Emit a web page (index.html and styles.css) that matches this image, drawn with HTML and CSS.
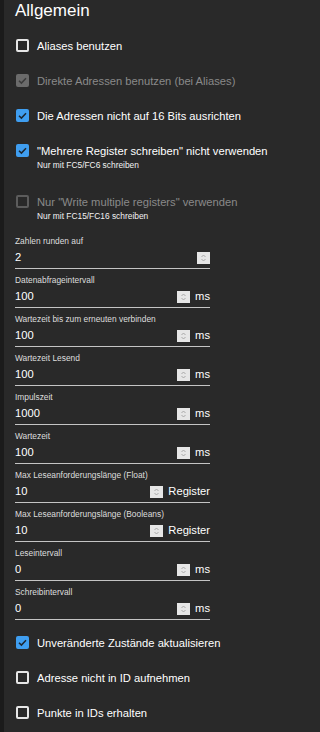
FILE: index.html
```html
<!DOCTYPE html>
<html lang="de">
<head>
<meta charset="utf-8">
<title>Allgemein</title>
<link rel="stylesheet" href="styles.css">
</head>
<body>
<div class="page">
  <h1 class="title">Allgemein</h1>

  <div class="checks">
    <div class="check">
      <span class="box"></span>
      <span class="text">Aliases benutzen</span>
    </div>
    <div class="check disabled">
      <span class="box checked"><svg viewBox="0 0 13 13"><polyline points="3,6.8 5.4,9.1 10,4.3"/></svg></span>
      <span class="text">Direkte Adressen benutzen (bei Aliases)</span>
    </div>
    <div class="check">
      <span class="box checked"><svg viewBox="0 0 13 13"><polyline points="3,6.8 5.4,9.1 10,4.3"/></svg></span>
      <span class="text">Die Adressen nicht auf 16 Bits ausrichten</span>
    </div>
    <div class="check">
      <span class="box checked"><svg viewBox="0 0 13 13"><polyline points="3,6.8 5.4,9.1 10,4.3"/></svg></span>
      <span class="text">"Mehrere Register schreiben" nicht verwenden</span>
    </div>
    <div class="help">Nur mit FC5/FC6 schreiben</div>
    <div class="check disabled spaced">
      <span class="box"></span>
      <span class="text">Nur "Write multiple registers" verwenden</span>
    </div>
    <div class="help">Nur mit FC15/FC16 schreiben</div>
  </div>

  <div class="fields">
    <div class="field">
      <div class="label">Zahlen runden auf</div>
      <div class="input">
        <span class="value">2</span>
        <span class="spin"><svg viewBox="0 0 13 12"><polyline points="4.5,5 6.5,3 8.5,5"/><polyline points="4.5,7 6.5,9 8.5,7"/></svg></span>
      </div>
    </div>
    <div class="field">
      <div class="label">Datenabfrageintervall</div>
      <div class="input">
        <span class="value">100</span>
        <span class="spin"><svg viewBox="0 0 13 12"><polyline points="4.5,5 6.5,3 8.5,5"/><polyline points="4.5,7 6.5,9 8.5,7"/></svg></span>
        <span class="unit">ms</span>
      </div>
    </div>
    <div class="field">
      <div class="label">Wartezeit bis zum erneuten verbinden</div>
      <div class="input">
        <span class="value">100</span>
        <span class="spin"><svg viewBox="0 0 13 12"><polyline points="4.5,5 6.5,3 8.5,5"/><polyline points="4.5,7 6.5,9 8.5,7"/></svg></span>
        <span class="unit">ms</span>
      </div>
    </div>
    <div class="field">
      <div class="label">Wartezeit Lesend</div>
      <div class="input">
        <span class="value">100</span>
        <span class="spin"><svg viewBox="0 0 13 12"><polyline points="4.5,5 6.5,3 8.5,5"/><polyline points="4.5,7 6.5,9 8.5,7"/></svg></span>
        <span class="unit">ms</span>
      </div>
    </div>
    <div class="field">
      <div class="label">Impulszeit</div>
      <div class="input">
        <span class="value">1000</span>
        <span class="spin"><svg viewBox="0 0 13 12"><polyline points="4.5,5 6.5,3 8.5,5"/><polyline points="4.5,7 6.5,9 8.5,7"/></svg></span>
        <span class="unit">ms</span>
      </div>
    </div>
    <div class="field">
      <div class="label">Wartezeit</div>
      <div class="input">
        <span class="value">100</span>
        <span class="spin"><svg viewBox="0 0 13 12"><polyline points="4.5,5 6.5,3 8.5,5"/><polyline points="4.5,7 6.5,9 8.5,7"/></svg></span>
        <span class="unit">ms</span>
      </div>
    </div>
    <div class="field">
      <div class="label">Max Leseanforderungslänge (Float)</div>
      <div class="input">
        <span class="value">10</span>
        <span class="spin"><svg viewBox="0 0 13 12"><polyline points="4.5,5 6.5,3 8.5,5"/><polyline points="4.5,7 6.5,9 8.5,7"/></svg></span>
        <span class="unit">Register</span>
      </div>
    </div>
    <div class="field">
      <div class="label">Max Leseanforderungslänge (Booleans)</div>
      <div class="input">
        <span class="value">10</span>
        <span class="spin"><svg viewBox="0 0 13 12"><polyline points="4.5,5 6.5,3 8.5,5"/><polyline points="4.5,7 6.5,9 8.5,7"/></svg></span>
        <span class="unit">Register</span>
      </div>
    </div>
    <div class="field">
      <div class="label">Leseintervall</div>
      <div class="input">
        <span class="value">0</span>
        <span class="spin"><svg viewBox="0 0 13 12"><polyline points="4.5,5 6.5,3 8.5,5"/><polyline points="4.5,7 6.5,9 8.5,7"/></svg></span>
        <span class="unit">ms</span>
      </div>
    </div>
    <div class="field">
      <div class="label">Schreibintervall</div>
      <div class="input">
        <span class="value">0</span>
        <span class="spin"><svg viewBox="0 0 13 12"><polyline points="4.5,5 6.5,3 8.5,5"/><polyline points="4.5,7 6.5,9 8.5,7"/></svg></span>
        <span class="unit">ms</span>
      </div>
    </div>
  </div>

  <div class="checks bottom">
    <div class="check">
      <span class="box checked"><svg viewBox="0 0 13 13"><polyline points="3,6.8 5.4,9.1 10,4.3"/></svg></span>
      <span class="text">Unveränderte Zustände aktualisieren</span>
    </div>
    <div class="check">
      <span class="box"></span>
      <span class="text">Adresse nicht in ID aufnehmen</span>
    </div>
    <div class="check">
      <span class="box"></span>
      <span class="text">Punkte in IDs erhalten</span>
    </div>
  </div>
</div>
</body>
</html>
```

FILE: styles.css
```css
html, body {
  margin: 0;
  padding: 0;
  background: #292929;
}

body {
  font-family: "Liberation Sans", Arial, sans-serif;
  color: #ffffff;
}

.page {
  box-sizing: border-box;
  min-height: 732px;
  border-left: 4px solid #1b1b1b;
  padding-left: 11px;
  padding-top: 1px;
}

.title {
  margin: 0;
  font-size: 17px;
  font-weight: normal;
  line-height: 20px;
  color: #ffffff;
}

.checks {
  margin-top: 7px;
}

.check {
  display: flex;
  align-items: center;
  height: 35px;
  padding-left: 1px;
}

.check.spaced {
  margin-top: 14px;
}

.box {
  box-sizing: border-box;
  width: 13px;
  height: 13px;
  border: 2px solid #e6e6e6;
  border-radius: 2px;
  flex: none;
  display: flex;
  align-items: center;
  justify-content: center;
}

.box svg {
  width: 13px;
  height: 13px;
  flex: none;
}

.box svg polyline {
  fill: none;
  stroke: #1d2630;
  stroke-width: 1.5;
}

.box.checked {
  border: none;
  background: #3f9ef0;
}

.check.disabled .box {
  border-color: #5c5c5c;
}

.check.disabled .box.checked {
  background: #6b6b6b;
}

.check.disabled .box.checked svg polyline {
  stroke: #3b3b3b;
}

.text {
  margin-left: 8px;
  font-size: 11.2px;
  line-height: 14px;
  white-space: nowrap;
}

.check.disabled .text {
  color: #8a8a8a;
}

.help {
  margin-top: -8px;
  margin-left: 22px;
  font-size: 8.4px;
  line-height: 10px;
  color: #f2f2f2;
  white-space: nowrap;
}

.fields {
  margin-top: 15px;
  width: 195px;
}

.field {
  margin-bottom: 6px;
}

.label {
  font-size: 8.4px;
  line-height: 10px;
  color: #dedede;
  white-space: nowrap;
}

.input {
  display: flex;
  align-items: center;
  height: 22px;
  border-bottom: 1px solid #c4c4c4;
}

.value {
  flex: 1;
  font-size: 11.2px;
  line-height: 22px;
  color: #ffffff;
}

.spin {
  width: 13px;
  height: 12px;
  margin-top: 2px;
  background: #e6e6e6;
  flex: none;
  display: flex;
}

.spin svg {
  width: 13px;
  height: 12px;
}

.spin svg polyline {
  fill: none;
  stroke: #a0a0a0;
  stroke-width: 0.9;
}

.unit {
  margin-left: 5px;
  font-size: 11.2px;
  line-height: 22px;
  color: #ffffff;
}

.checks.bottom {
  margin-top: -1px;
}
```
